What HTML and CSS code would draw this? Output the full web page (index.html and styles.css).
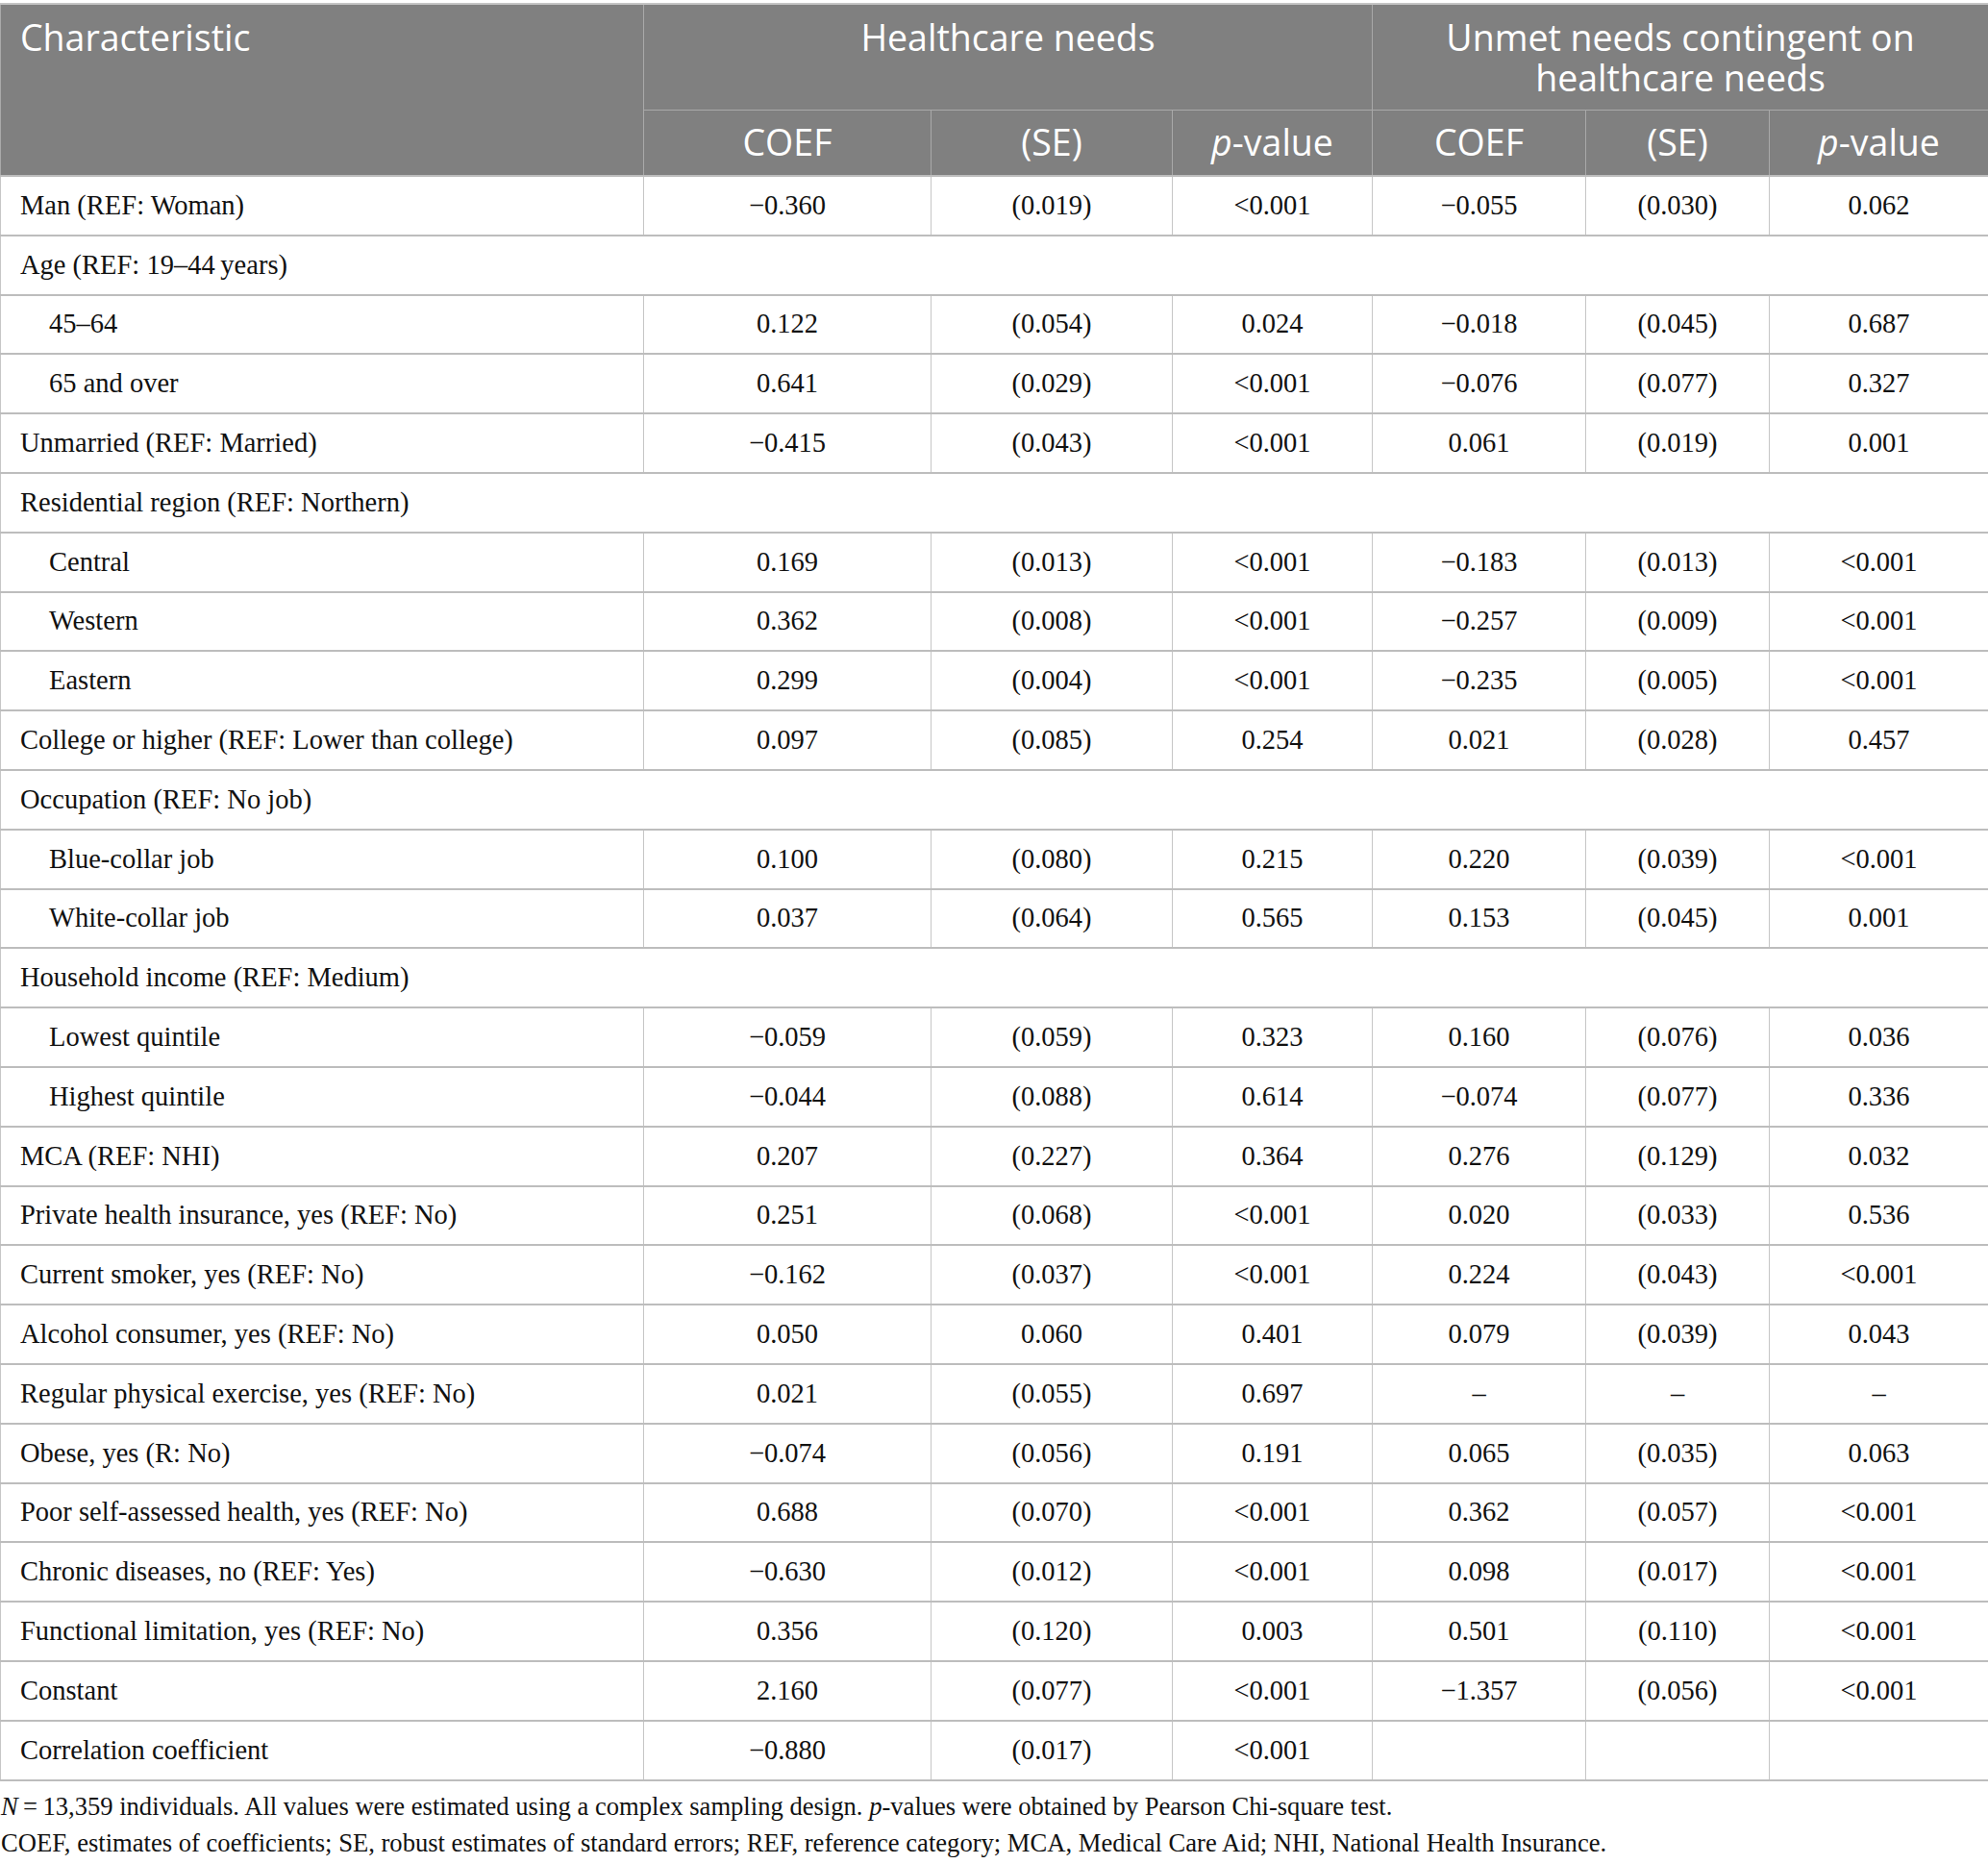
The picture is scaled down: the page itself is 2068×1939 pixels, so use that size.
FILE: index.html
```html
<!DOCTYPE html>
<html lang="en">
<head>
<meta charset="utf-8">
<title>Table</title>
<link rel="stylesheet" href="styles.css">
</head>
<body>
<table class="tbl">
<colgroup>
<col class="c-char"><col class="c-a1"><col class="c-a2"><col class="c-a3"><col class="c-b1"><col class="c-b2"><col class="c-b3">
</colgroup>
<thead>
<tr class="hrow1">
<th rowspan="2" class="hchar">Characteristic</th>
<th colspan="3" class="hgrp">Healthcare needs</th>
<th colspan="3" class="hgrp"><span class="hline">Unmet needs contingent on</span><span class="hline">healthcare needs</span></th>
</tr>
<tr class="hrow2">
<th>COEF</th><th>(SE)</th><th><i>p</i>-value</th>
<th>COEF</th><th>(SE)</th><th><i>p</i>-value</th>
</tr>
</thead>
<tbody>
<tr><td class="lbl">Man (REF: Woman)</td><td>−0.360</td><td>(0.019)</td><td>&lt;0.001</td><td>−0.055</td><td>(0.030)</td><td>0.062</td></tr>
<tr><td class="lbl" colspan="7">Age (REF: 19–44&#8201;years)</td></tr>
<tr><td class="lbl sub">45–64</td><td>0.122</td><td>(0.054)</td><td>0.024</td><td>−0.018</td><td>(0.045)</td><td>0.687</td></tr>
<tr><td class="lbl sub">65 and over</td><td>0.641</td><td>(0.029)</td><td>&lt;0.001</td><td>−0.076</td><td>(0.077)</td><td>0.327</td></tr>
<tr><td class="lbl">Unmarried (REF: Married)</td><td>−0.415</td><td>(0.043)</td><td>&lt;0.001</td><td>0.061</td><td>(0.019)</td><td>0.001</td></tr>
<tr><td class="lbl" colspan="7">Residential region (REF: Northern)</td></tr>
<tr><td class="lbl sub">Central</td><td>0.169</td><td>(0.013)</td><td>&lt;0.001</td><td>−0.183</td><td>(0.013)</td><td>&lt;0.001</td></tr>
<tr><td class="lbl sub">Western</td><td>0.362</td><td>(0.008)</td><td>&lt;0.001</td><td>−0.257</td><td>(0.009)</td><td>&lt;0.001</td></tr>
<tr><td class="lbl sub">Eastern</td><td>0.299</td><td>(0.004)</td><td>&lt;0.001</td><td>−0.235</td><td>(0.005)</td><td>&lt;0.001</td></tr>
<tr><td class="lbl">College or higher (REF: Lower than college)</td><td>0.097</td><td>(0.085)</td><td>0.254</td><td>0.021</td><td>(0.028)</td><td>0.457</td></tr>
<tr><td class="lbl" colspan="7">Occupation (REF: No job)</td></tr>
<tr><td class="lbl sub">Blue-collar job</td><td>0.100</td><td>(0.080)</td><td>0.215</td><td>0.220</td><td>(0.039)</td><td>&lt;0.001</td></tr>
<tr><td class="lbl sub">White-collar job</td><td>0.037</td><td>(0.064)</td><td>0.565</td><td>0.153</td><td>(0.045)</td><td>0.001</td></tr>
<tr><td class="lbl" colspan="7">Household income (REF: Medium)</td></tr>
<tr><td class="lbl sub">Lowest quintile</td><td>−0.059</td><td>(0.059)</td><td>0.323</td><td>0.160</td><td>(0.076)</td><td>0.036</td></tr>
<tr><td class="lbl sub">Highest quintile</td><td>−0.044</td><td>(0.088)</td><td>0.614</td><td>−0.074</td><td>(0.077)</td><td>0.336</td></tr>
<tr><td class="lbl">MCA (REF: NHI)</td><td>0.207</td><td>(0.227)</td><td>0.364</td><td>0.276</td><td>(0.129)</td><td>0.032</td></tr>
<tr><td class="lbl">Private health insurance, yes (REF: No)</td><td>0.251</td><td>(0.068)</td><td>&lt;0.001</td><td>0.020</td><td>(0.033)</td><td>0.536</td></tr>
<tr><td class="lbl">Current smoker, yes (REF: No)</td><td>−0.162</td><td>(0.037)</td><td>&lt;0.001</td><td>0.224</td><td>(0.043)</td><td>&lt;0.001</td></tr>
<tr><td class="lbl">Alcohol consumer, yes (REF: No)</td><td>0.050</td><td>0.060</td><td>0.401</td><td>0.079</td><td>(0.039)</td><td>0.043</td></tr>
<tr><td class="lbl">Regular physical exercise, yes (REF: No)</td><td>0.021</td><td>(0.055)</td><td>0.697</td><td>–</td><td>–</td><td>–</td></tr>
<tr><td class="lbl">Obese, yes (R: No)</td><td>−0.074</td><td>(0.056)</td><td>0.191</td><td>0.065</td><td>(0.035)</td><td>0.063</td></tr>
<tr><td class="lbl">Poor self-assessed health, yes (REF: No)</td><td>0.688</td><td>(0.070)</td><td>&lt;0.001</td><td>0.362</td><td>(0.057)</td><td>&lt;0.001</td></tr>
<tr><td class="lbl">Chronic diseases, no (REF: Yes)</td><td>−0.630</td><td>(0.012)</td><td>&lt;0.001</td><td>0.098</td><td>(0.017)</td><td>&lt;0.001</td></tr>
<tr><td class="lbl">Functional limitation, yes (REF: No)</td><td>0.356</td><td>(0.120)</td><td>0.003</td><td>0.501</td><td>(0.110)</td><td>&lt;0.001</td></tr>
<tr><td class="lbl">Constant</td><td>2.160</td><td>(0.077)</td><td>&lt;0.001</td><td>−1.357</td><td>(0.056)</td><td>&lt;0.001</td></tr>
<tr><td class="lbl">Correlation coefficient</td><td>−0.880</td><td>(0.017)</td><td>&lt;0.001</td><td></td><td></td><td></td></tr>
</tbody>
</table>
<div class="notes">
<p><i>N</i>&#8201;=&#8201;13,359 individuals. All values were estimated using a complex sampling design. <i>p</i>-values were obtained by Pearson Chi-square test.</p>
<p>COEF, estimates of coefficients; SE, robust estimates of standard errors; REF, reference category; MCA, Medical Care Aid; NHI, National Health Insurance.</p>
</div>
</body>
</html>
```
FILE: styles.css
```css
html, body {
  margin: 0;
  padding: 0;
  background: #ffffff;
}
body {
  padding-top: 3px;
  font-family: "Liberation Serif", "Times New Roman", serif;
  color: #111111;
}
.tbl {
  width: 2068px;
  border-collapse: collapse;
  table-layout: fixed;
}
.c-char { width: 669px; }
.c-a1 { width: 299px; }
.c-a2 { width: 251px; }
.c-a3 { width: 208px; }
.c-b1 { width: 222px; }
.c-b2 { width: 191px; }
.c-b3 { width: 228px; }

.tbl th {
  background: #808080;
  color: #ffffff;
  font-family: "Open Sans", "Noto Sans", sans-serif;
  font-weight: 400;
  font-size: 37.5px;
  line-height: 42px;
  border: 1px solid #a9a9a9;
  padding: 0 10px;
}
.tbl thead tr:first-child th {
  border-top: 2px solid #c4c4c4;
}
.hrow1 th {
  height: 110px;
  vertical-align: top;
  padding-top: 13px;
  box-sizing: border-box;
}
.hline {
  display: block;
  height: 42px;
}
.hchar {
  text-align: left;
  padding-left: 20px !important;
}
.hgrp {
  text-align: center;
}
.hrow2 th {
  height: 69px;
  vertical-align: middle;
  text-align: center;
  box-sizing: border-box;
}
.tbl td {
  height: 61.8px;
  box-sizing: border-box;
  font-size: 28.5px;
  line-height: 32px;
  text-align: center;
  vertical-align: middle;
  padding: 0 8px;
  border-top: 2px solid #bdbdbd;
  border-bottom: 2px solid #bdbdbd;
  border-left: 1px solid #c6c6c6;
  border-right: 1px solid #c6c6c6;
  white-space: nowrap;
}
.tbl td.lbl {
  text-align: left;
  padding-left: 20px;
}
.tbl td.sub {
  padding-left: 50px;
}
.notes {
  margin-top: 7px;
  padding-left: 1px;
}
.notes p {
  margin: 0;
  font-size: 26.6px;
  line-height: 38px;
  color: #111111;
}
```
